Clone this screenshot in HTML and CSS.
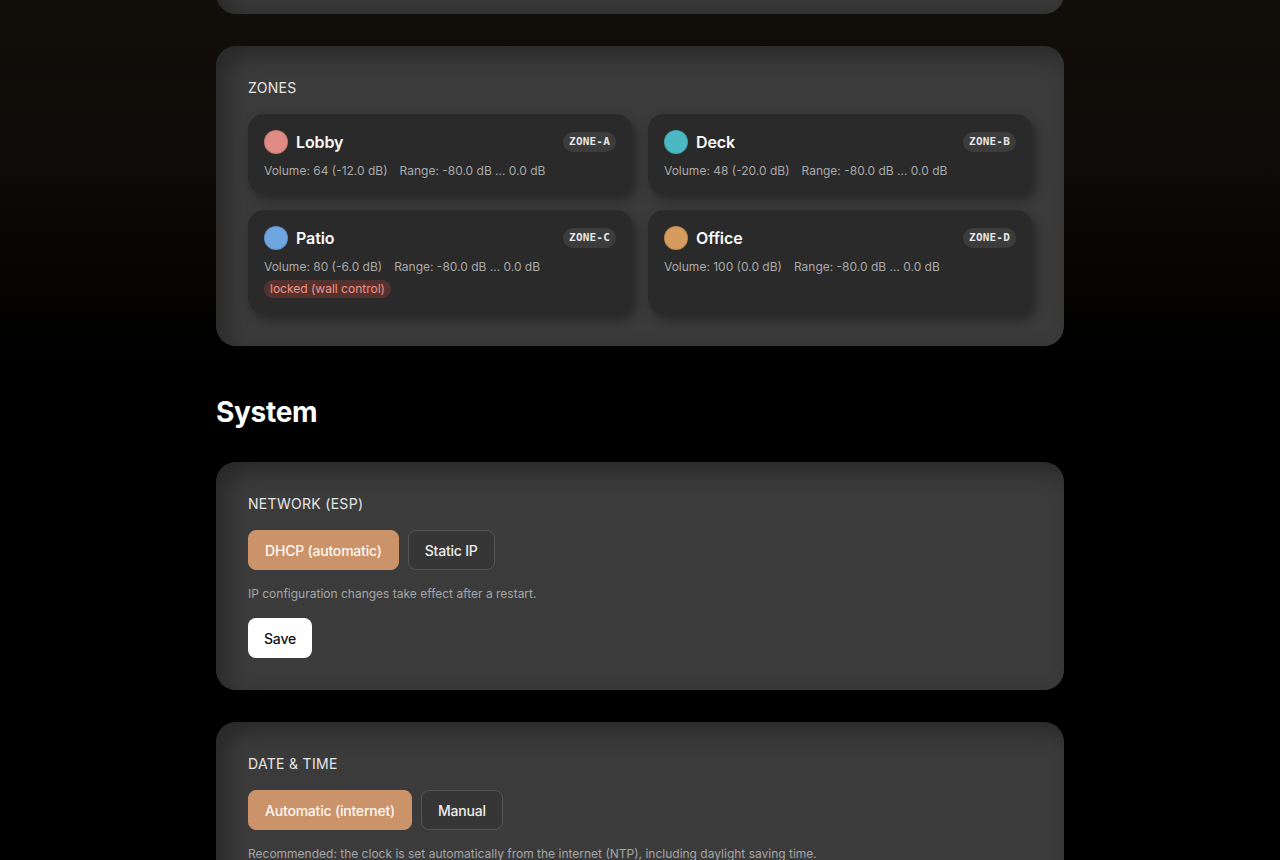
FILE: index.html
```html
<!DOCTYPE html>
<html lang="en">
<head>
<meta charset="utf-8">
<title>Settings</title>
<link rel="stylesheet" href="styles.css">
</head>
<body>
<main class="page">
  <section class="card card-partial"></section>

  <section class="card">
    <div class="card-label">ZONES</div>
    <div class="zones">
      <div class="zone">
        <div class="zone-head">
          <span class="dot dot-lobby"></span>
          <span class="zone-name">Lobby</span>
          <span class="zone-id">ZONE-A</span>
        </div>
        <div class="zone-meta"><span>Volume: 64 (-12.0 dB)</span><span>Range: -80.0 dB … 0.0 dB</span></div>
      </div>
      <div class="zone">
        <div class="zone-head">
          <span class="dot dot-deck"></span>
          <span class="zone-name">Deck</span>
          <span class="zone-id">ZONE-B</span>
        </div>
        <div class="zone-meta"><span>Volume: 48 (-20.0 dB)</span><span>Range: -80.0 dB … 0.0 dB</span></div>
      </div>
      <div class="zone">
        <div class="zone-head">
          <span class="dot dot-patio"></span>
          <span class="zone-name">Patio</span>
          <span class="zone-id">ZONE-C</span>
        </div>
        <div class="zone-meta"><span>Volume: 80 (-6.0 dB)</span><span>Range: -80.0 dB … 0.0 dB</span></div>
        <div class="locked">locked (wall control)</div>
      </div>
      <div class="zone">
        <div class="zone-head">
          <span class="dot dot-office"></span>
          <span class="zone-name">Office</span>
          <span class="zone-id">ZONE-D</span>
        </div>
        <div class="zone-meta"><span>Volume: 100 (0.0 dB)</span><span>Range: -80.0 dB … 0.0 dB</span></div>
      </div>
    </div>
  </section>

  <h2 class="section-title">System</h2>

  <section class="card">
    <div class="card-label">NETWORK (ESP)</div>
    <div class="seg">
      <button class="btn btn-active">DHCP (automatic)</button>
      <button class="btn">Static IP</button>
    </div>
    <p class="hint">IP configuration changes take effect after a restart.</p>
    <button class="btn-save">Save</button>
  </section>

  <section class="card">
    <div class="card-label">DATE &amp; TIME</div>
    <div class="seg">
      <button class="btn btn-active">Automatic (internet)</button>
      <button class="btn">Manual</button>
    </div>
    <p class="hint">Recommended: the clock is set automatically from the internet (NTP), including daylight saving time.</p>
    <div class="spacer"></div>
  </section>
</main>
</body>
</html>
```

FILE: styles.css
```css
* { box-sizing: border-box; }
html, body { margin: 0; padding: 0; }
body {
  min-height: 100vh;
  background: linear-gradient(180deg, #120e0a 0px, #0e0b08 160px, #040302 300px, #000 380px);
  font-family: Inter, "Noto Sans", "Liberation Sans", sans-serif;
  color: #f2f2f2;
  overflow: hidden;
}
.page {
  width: 848px;
  margin: 0 auto;
  display: flex;
  flex-direction: column;
  gap: 32px;
}
.card {
  background: #3b3b3b;
  border-radius: 20px;
  padding: 32px;
  box-shadow: inset 10px 10px 22px rgba(0, 0, 0, 0.32);
}
.card-partial {
  height: 60px;
  margin-top: -46px;
  padding: 0;
  box-shadow: inset 10px 0 22px rgba(0, 0, 0, 0.3);
}
.card-label {
  font-size: 14px;
  line-height: 20px;
  letter-spacing: 0.3px;
  color: #e6e6e6;
}
.zones {
  margin-top: 16px;
  display: grid;
  grid-template-columns: 1fr 1fr;
  gap: 16px;
}
.zone {
  background: #2a2a2a;
  border-radius: 16px;
  padding: 16px;
  box-shadow: 4px 6px 12px rgba(0, 0, 0, 0.35);
}
.zone-head {
  display: flex;
  align-items: center;
  height: 24px;
}
.dot {
  width: 24px;
  height: 24px;
  border-radius: 50%;
  margin-right: 8px;
  flex: none;
  box-shadow: inset 0 0 0 1px rgba(0, 0, 0, 0.12);
}
.dot-lobby { background: #e08a84; }
.dot-deck { background: #4bb8c4; }
.dot-patio { background: #6ea6e0; }
.dot-office { background: #d69b5e; }
.zone-name {
  font-size: 16px;
  font-weight: 600;
  color: #fafafa;
  flex: 1;
  letter-spacing: -0.1px;
}
.zone-id {
  font-family: "DejaVu Sans Mono", "Liberation Mono", monospace;
  font-weight: 700;
  font-size: 11px;
  line-height: 20px;
  height: 20px;
  padding: 0 6px;
  border-radius: 10px;
  background: #3c3c3c;
  color: #e6e6e6;
  letter-spacing: 0.2px;
}
.zone-meta {
  margin-top: 8px;
  font-size: 12px;
  line-height: 17px;
  color: #a9a9a9;
  display: flex;
  gap: 12px;
}
.locked {
  display: inline-block;
  margin-top: 5px;
  font-size: 12px;
  line-height: 18px;
  padding: 0 6px;
  border-radius: 9px;
  background: #56322f;
  color: #f1928a;
}
.zone:first-child, .zone:nth-child(2) { padding-bottom: 15px; }
.section-title {
  margin: 16px 0 0;
  font-size: 28px;
  line-height: 36px;
  font-weight: 700;
  color: #ffffff;
  letter-spacing: -0.3px;
}
.seg {
  margin-top: 16px;
  display: flex;
  gap: 9px;
}
.btn {
  height: 40px;
  padding: 0 16px;
  border-radius: 8px;
  border: 1px solid #555;
  background: #363636;
  color: #ececec;
  font-family: inherit;
  font-size: 14px;
  font-weight: 500;
  letter-spacing: -0.2px;
}
.btn-active {
  background: #cb936a;
  border-color: #cb936a;
  color: #fff7f0;
}
.hint {
  margin: 16px 0 0;
  font-size: 12px;
  line-height: 16px;
  color: #a6a6a6;
}
.btn-save {
  margin-top: 16px;
  align-self: flex-start;
  height: 40px;
  padding: 0 16px;
  border-radius: 8px;
  border: none;
  background: #ffffff;
  color: #111;
  font-family: inherit;
  font-size: 14px;
  font-weight: 500;
  letter-spacing: -0.2px;
}
.spacer { height: 60px; }
```
